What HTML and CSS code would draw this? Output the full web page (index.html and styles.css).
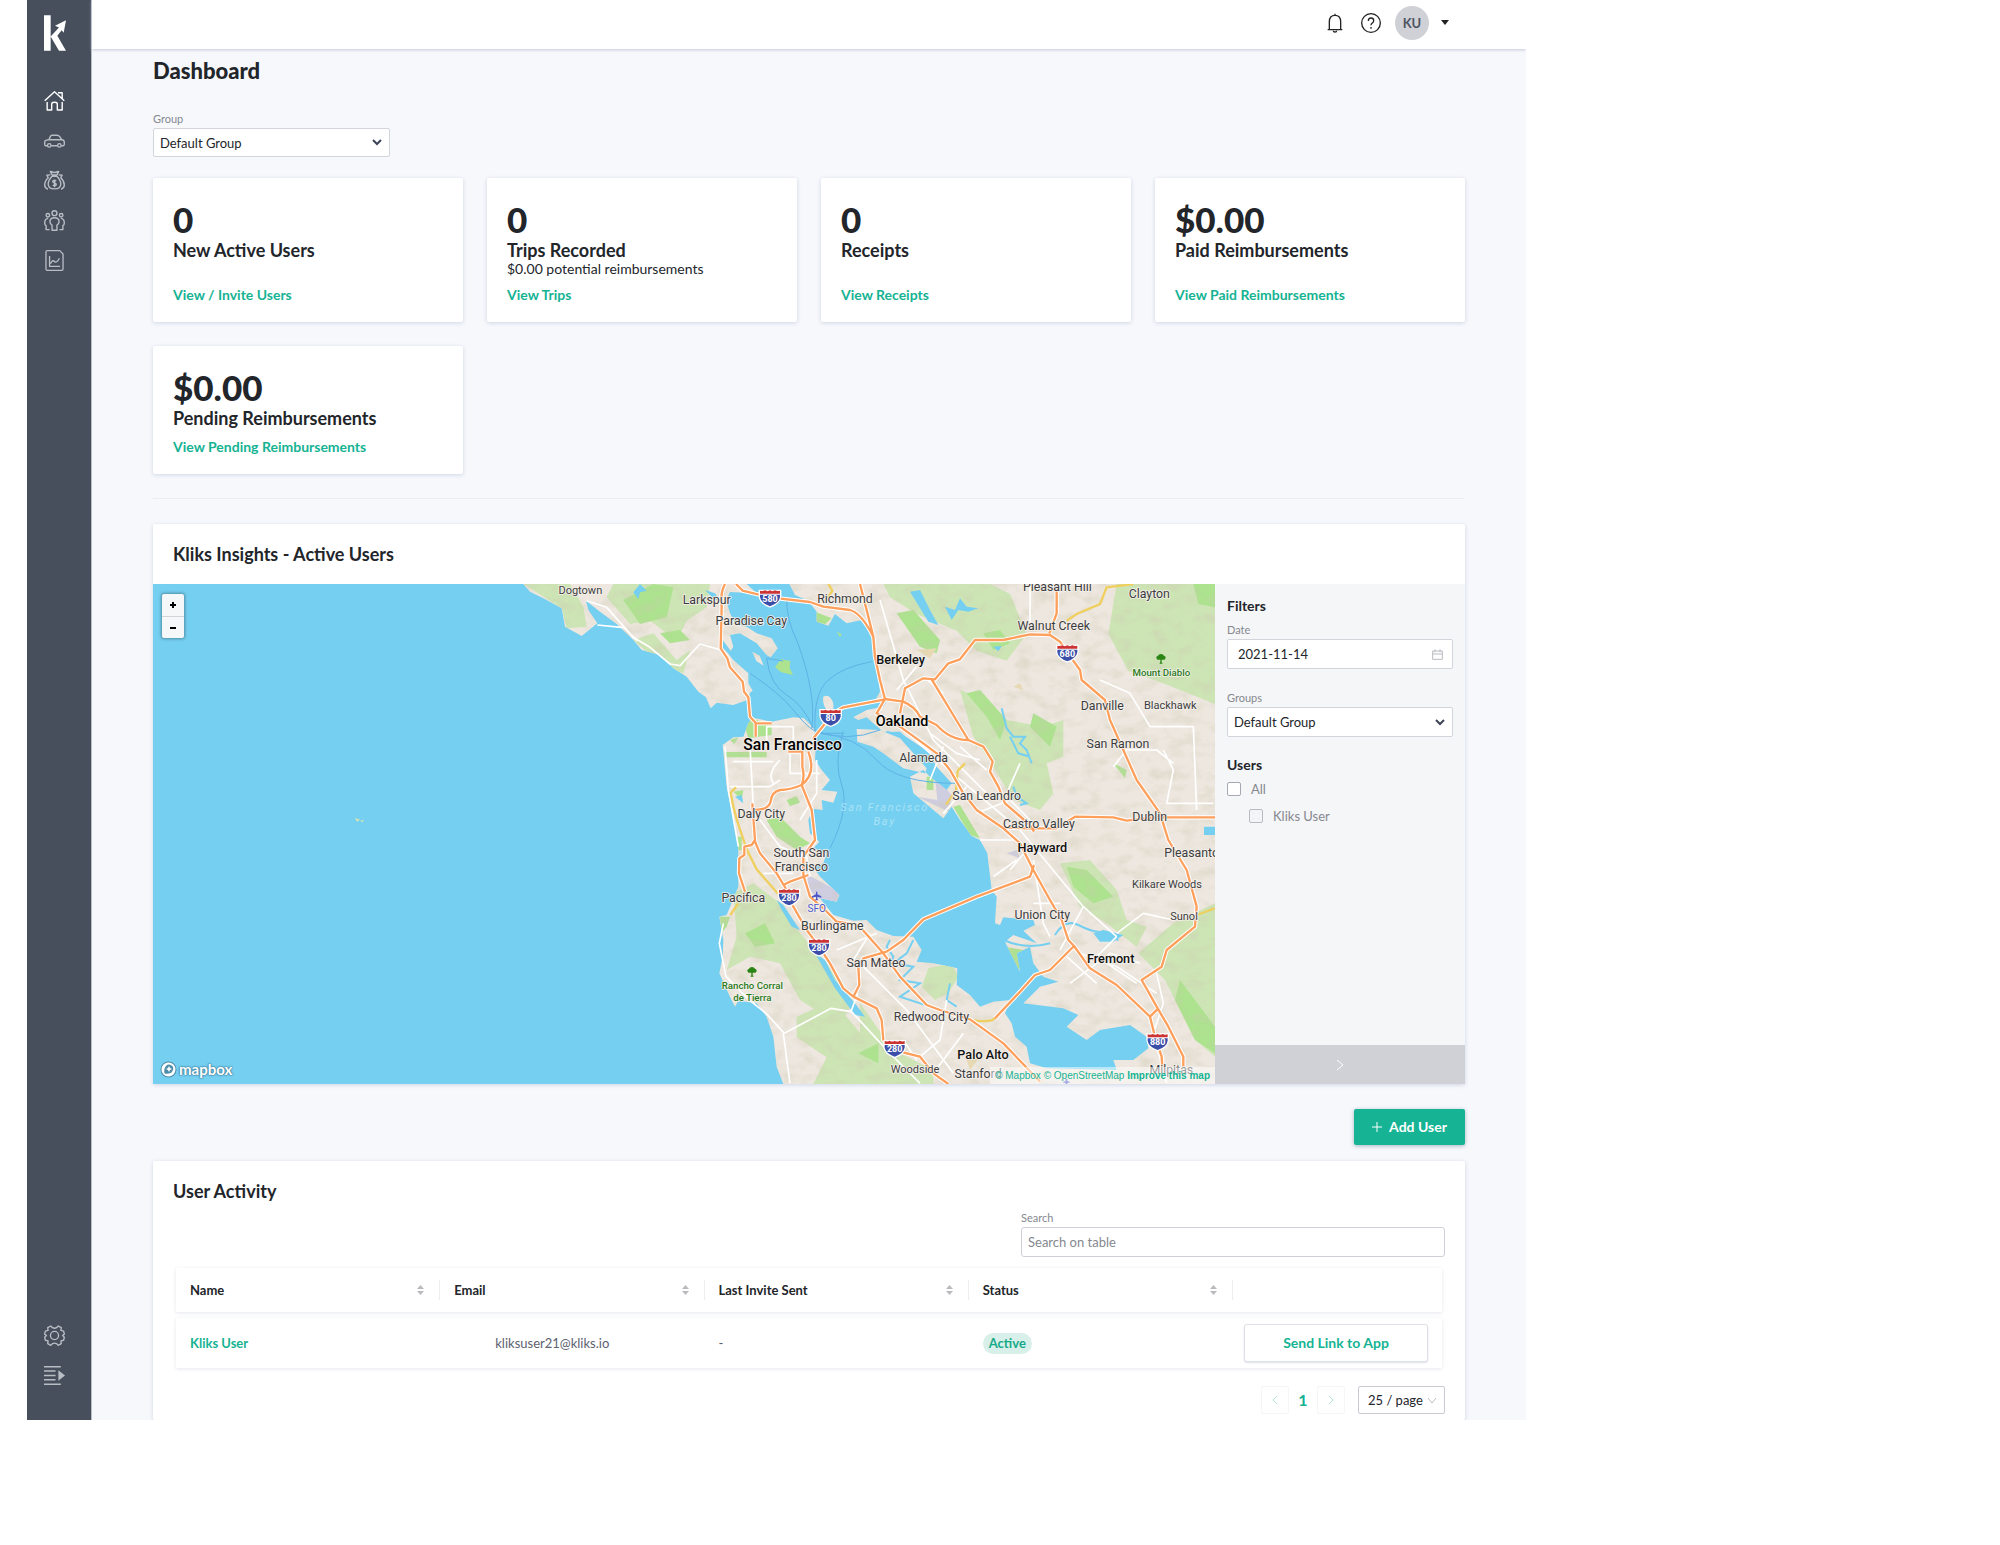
FILE: index.html
```html
<!DOCTYPE html>
<html lang="en">
<head>
<meta charset="utf-8">
<meta name="viewport" content="width=device-width, initial-scale=1">
<title>Dashboard</title>
<link rel="stylesheet" href="styles.css">
</head>
<body>
<div class="app">
  <nav class="sidebar" aria-label="Main">
    <a class="logo" href="#" aria-label="Kliks">
      <svg width="22" height="36" viewBox="0 0 66 107"><path fill="#fff" d="M0 0h20v107H0zM20 64L45 37 33 32 66 15 59 53 53 45 40 62 66 107H45z"/></svg>
    </a>
    <a class="nav-link current" href="#" aria-label="Dashboard">
      <svg class="icon" viewBox="0 0 60 60"><path d="M2 31L30 5l28 26M40 8h12v16M9 34v23h13V40q0-5 8-5t8 5v17h14V34"/></svg>
    </a>
    <a class="nav-link" href="#" aria-label="Trips">
      <svg class="icon" viewBox="0 0 60 60"><path d="M9 45H4q-2 0-2-4v-7q0-4 5-5l7-1 4-9q1-4 6-4h13q5 0 8 4l6 9q7 1 7 7v6q0 4-3 4h-5M21 45h17M14 28h36"/><circle cx="15" cy="44" r="5"/><circle cx="44" cy="44" r="5"/></svg>
    </a>
    <a class="nav-link" href="#" aria-label="Reimbursements">
      <svg class="icon" viewBox="0 0 60 60"><path d="M22 5q8 4 16 0l4-1-5 10H23L18 4zM23 18h14M23 18Q12 30 12 40q0 14 18 14t18-14q0-10-11-22M18 14L8 15l4 7Q2 31 2 43q0 9 9 12M42 14l10 1-4 7q10 9 10 21 0 9-9 12M35 31q-9-4-10 2 0 3 5 4t5 5q-2 5-10 1M30 27v22"/></svg>
    </a>
    <a class="nav-link" href="#" aria-label="Team">
      <svg class="icon" viewBox="0 0 60 60"><circle cx="30" cy="9" r="7"/><circle cx="11" cy="15" r="5"/><circle cx="49" cy="15" r="5"/><path d="M23 58V43q-6-3-6-10 0-11 13-11t13 11q0 7-6 10v15zM12 24q-10 1-10 13 0 6 4 8v11h10M48 24q10 1 10 13 0 6-4 8v11H44"/></svg>
    </a>
    <a class="nav-link" href="#" aria-label="Reports">
      <svg class="icon" viewBox="0 0 60 64"><path d="M4 6q0-4 4-4h38l10 10v46q0 4-4 4H8q-4 0-4-4zM15 18v32h32M18 42q6-14 12-7t15-10"/></svg>
    </a>
    <a class="nav-link push" href="#" aria-label="Settings">
      <svg class="icon" viewBox="0 0 62 62"><circle cx="31" cy="31" r="12"/><path d="M25 8l-5-5-9 5 1 8-8 2-2 9 5 4-5 5 2 9 8 2-1 8 9 5 5-5q6-3 12 0l5 5 9-5-1-8 8-2 2-9-5-5 5-4-2-9-8-2 1-8-9-5-5 5q-6 3-12 0z"/></svg>
    </a>
    <button class="nav-link" type="button" aria-label="Expand menu">
      <svg class="icon" viewBox="0 0 60 60"><path d="M0 5h48M0 17h33M0 30h33M0 42h33M0 55h48"/><path fill="currentColor" stroke="none" d="M41 15l19 15-19 15z"/></svg>
    </button>
  </nav>

  <div class="page">
    <header class="topbar">
      <button class="plain" type="button" aria-label="Notifications">
        <svg width="16" height="20" viewBox="0 0 48 60" fill="none" stroke="#222" stroke-width="4"><path d="M2 50h44M7 50V26Q7 7 24 7t17 19v24M24 2v5M19 53q0 4 5 4t5-4"/></svg>
      </button>
      <button class="plain help" type="button" aria-label="Help">
        <svg width="20" height="20" viewBox="0 0 60 60" fill="none" stroke="#222" stroke-width="4"><circle cx="30" cy="30" r="28"/><path d="M22 24q0-9 8-9t8 8q0 4-4 7t-4 7M30 42v5"/></svg>
      </button>
      <span class="avatar">KU</span>
      <button class="plain" type="button" aria-label="Account menu">
        <svg width="8" height="6" viewBox="0 0 8 6"><path fill="#222" d="M0 0h8L4 5z"/></svg>
      </button>
    </header>

    <main class="content">
      <h1>Dashboard</h1>
      <div class="field group-field">
        <label for="group">Group</label>
        <div class="select">
          <select id="group"><option>Default Group</option></select>
          <svg class="chevron" viewBox="0 0 10 7"><path d="M1 1l4 4 4-4"/></svg>
        </div>
      </div>

      <section class="stats">
        <article class="card stat"><strong>0</strong><h2>New Active Users</h2><a href="#">View / Invite Users</a></article>
        <article class="card stat"><strong>0</strong><h2>Trips Recorded</h2><p>$0.00 potential reimbursements</p><a href="#">View Trips</a></article>
        <article class="card stat"><strong>0</strong><h2>Receipts</h2><a href="#">View Receipts</a></article>
        <article class="card stat"><strong>$0.00</strong><h2>Paid Reimbursements</h2><a href="#">View Paid Reimbursements</a></article>
        <article class="card stat"><strong>$0.00</strong><h2>Pending Reimbursements</h2><a href="#">View Pending Reimbursements</a></article>
      </section>

      <hr>

      <section class="card insights">
        <h2>Kliks Insights - Active Users</h2>
        <div class="insights-body">
          <div class="map">
            <svg class="map-canvas" viewBox="-1041 12 3186 1500" preserveAspectRatio="xMidYMid slice" role="img" aria-label="Map of the San Francisco Bay Area">
              <defs>
                <filter id="relief" x="0" y="0" width="100%" height="100%">
                  <feTurbulence type="fractalNoise" baseFrequency=".02 .03" numOctaves="3" seed="8"/>
                  <feColorMatrix values="0 0 0 0 .62  0 0 0 0 .58  0 0 0 0 .45  1.6 0 0 0 -.72"/>
                </filter>
                <g id="shield"><path fill="#fff" d="M-34-24h68v20q-2 24-34 34-32-10-34-34z"/><path fill="#3c4fa8" d="M-30-9h60v7Q28 16 0 26-28 16-30-2z"/><path fill="#cc3333" d="M-30-12v-9q8 3 15-1 8 5 15 0 7 5 15 0 7 4 15 1v9z"/></g>
                <g id="tree" fill="#2a8515"><path d="M-13-1q-3-7 4-9 2-5 9-5t9 5q7 2 4 9-3 5-9 3h-8q-6 2-9-3zM-2 0h4v10l3 4H-5l3-4z"/></g>
                <path id="land" d="M70 12L90 35 130 55 185 85 195 140 245 168 292 130 265 90 258 62 300 95 350 132 400 180 425 210 480 225 520 265 560 290 595 335 618 352 632 385 650 368 700 375 742 360 750 338 758 332 745 310 745 280 700 240 680 215 664 200 668 180 692 212 700 200 690 165 720 160 770 190 800 225 812 232 833 205 815 175 770 160 740 140 705 130 690 100 678 60 690 36 770 40 740 12zM757 215l22 12 12 30-22-14zM970 350q20-10 30 20l0 20-20 0q-14-18-10-40z
                  M668 495L700 472 730 470 745 430 757 413 815 425 880 412 912 415 942 445 948 480 945 540 965 570 990 600 965 630 1012 635 1000 668 965 660 968 690 938 686 925 720 930 760 958 785 940 805 980 820 970 850 940 860 958 888 990 918 1018 945 1010 965 960 955 1000 1005 1060 1022 1100 1020 1130 1050 1180 1068 1240 1070 1265 1110 1250 1145 1300 1150 1372 1165 1370 1215 1410 1245 1440 1280 1480 1265 1530 1260 1515 1300 1535 1330 1545 1370 1580 1400 1590 1450 1640 1465 1640 1512 850 1512 830 1460 820 1370 800 1310 770 1270 715 1262 705 1280 690 1250 658 1180 668 1130 670 1080 658 1010 680 1005 715 920 715 800 705 740 680 620z
                  M868 12L885 45 925 62 950 95 950 125 985 137 1005 102 1040 130 1085 120 1115 150 1125 190 1130 260 1140 335 1125 362 1165 355 1150 380 1100 390 1060 412 1075 420 1100 412 1120 430 1150 455 1200 455 1240 490 1280 510 1310 560 1355 610 1340 630 1290 590 1270 570 1230 590 1240 640 1330 715 1355 680 1380 720 1415 768 1440 780 1462 820 1475 930 1490 950 1485 1030 1500 1035 1510 1012 1600 1020 1605 1035 1570 1052 1610 1090 1540 1065 1515 1085 1560 1175 1550 1120 1590 1100 1600 1150 1630 1190 1675 1205 1620 1220 1570 1270 1690 1285 1735 1305 1700 1340 1760 1380 1800 1350 1890 1335 1940 1370 1945 1405 1900 1440 1840 1440 1850 1470 1640 1465 1640 1512 2145 1512 2145 12z
                  M1070 447L1140 450 1200 475 1240 520 1280 565 1275 580 1210 565 1150 520 1120 500 1072 485z"/>
                <clipPath id="land-clip"><use href="#land"/></clipPath>
              </defs>
              <rect x="-1041" y="12" width="3186" height="1500" fill="#75cff0"/>
              <use href="#land" fill="#ede7df"/>
              <g clip-path="url(#land-clip)">
                <g fill="#cde5b5">
                  <path d="M70 12l115 73 15 60 60-5-10-60-40-68zM340 12h290l-10 70-60 40-30 60-80-60-60 10-70-80zM400 180l60-20 70 80 40-30-20 70-60-20z"/>
                  <path d="M700 940l60-30 80 60 60 90 90 100 60 120-30 60-40-30-80-50-60-110-90-20-70 40 30-100zM890 1310l90-40 60 40 100 120v82H940l40-80-90-60zM1080 1270l100 140 120 60v42h-220z"/>
                  <path d="M1150 12h320l60 30 50 120-60 80-90-30-60-60-120-50-80-50zM1380 330l80 30 60 60 110 20 60-20v110l-50 20 20 90-40 50-80-30-60-100-60-90zM1850 12h295v360l-150-60-110-40-60-110zM1680 850l90-10 80 90 30 90 60 20-30 60-90-70-80-50z"/>
                  <path d="M2020 1030l125-60v460l-60-50-90-180-80-80zM1285 1165l70-15 20 40-30 50-40 20-40-40z"/>
                </g>
                <g fill="#ade28f">
                  <path d="M370 60l90-48 60 10-20 90-80 20zM480 160l60-10 30 30-60 10zM735 440l20-25 60 20v30l-70 10zM678 516h122v16H678zM800 720l40-10 60 60 30 20-40 20-60-40zM735 1060l60-30 30 60-60 10zM1075 1420l60-30v60zM690 480l25-8-12 20zM860 660l30-12 10 20-30 10zM700 635l30-5-5 30zM710 770l15 0v40h-15zM660 1010h30l-10 30-16 20zM945 95l50 20-20 18-25-8z"/>
                  <path d="M1190 100l50-10 80 90-10 40-50-20zM1700 860l60 10 80 80-60 20-60-50zM1450 160l50-10 30 40-50 20zM1600 400l70 40-20 60-60-60zM1510 1100l60 10-5 50-20 20-30-30zM1840 550l40 20-5 25zM2040 1200l105 140v80l-60-40-60-120zM2080 12h65v70l-50-10zM1400 340l40-10 80 90-20 60-40-70zM1360 680l20-5 60 100-30-10zM1830 1370l60 60-70 10zM1280 590h20v40h-20z"/>
                </g>
                <g fill="#cfcde0"><path d="M925 885l93 50-8 30-60-10-30-40zM1305 590l50 55-8 50-95-45 60 10zM1520 820l30-10 10 25z"/></g>
                <g fill="#e6d9b3"><path d="M1250 210l60-5-20 30zM1400 1440l40-10-30 40zM1540 320l20-10 10 20z"/></g>
                <rect x="70" y="12" width="2075" height="1500" filter="url(#relief)" opacity=".6"/>
              </g>
              <path fill="#ade28f" d="M825 262l18-24 28 5-2 20 10 22-35-8zM1010 155l15 8-5 8z"/>
              <g fill="#75cff0">
                <path d="M1230 35l30-5 30 60 25 45-30-10zM1335 80l30 10 15-35 20 25 35 5-30 10-30-5-20 30zM1480 200l25-2-10 16zM830 960l20 15 40 60 10 15-25-10-30-50zM945 1120l30 20 30 60 60 70 30 40-30-5-60-80zM2112 740h33v25h-33zM1780 1060l30-10 60 15-30 20-40 0zM705 650l20-5 5 25z"/>
                <path d="M420 12l20 20-20 5-5 20-15-20zM615 30l30 10 20 30-30-20z"/>
              </g>
              <g fill="none" stroke="#75cff0" stroke-width="6"><path d="M1505 385l15 60 20 25 35 0-15 20 20 20 15 40M1530 470l25 50 35 10M1540 620l10 30 30 20-20 5M1170 1080l-10 20 20 30-10 30M1240 1080l-20 40-40 30 60 10-40 40 60 10-60 40 90 30M1350 1210l-10 50 30 20M1665 1065q30-50 70-30t60 20l60 25M1510 1080q70 30 140 10M1160 455l60 20 60 40 20 30M1300 560l40 50"/></g>
              <path fill="none" stroke="#5fb2e6" stroke-width="3" d="M750 280q90 60 130 110t60 60M800 235q10 80 60 110t80 100M800 235l50 8M860 60q0 60 30 120 60 160 45 265M945 450q-5-110 40-150t130-55M940 450q100 40 200 0M960 460q110 10 170 80t240 70M1030 455q-30 90-5 160t-35 190M960 460h70"/>
              <g fill="none" stroke="#fff" stroke-width="5" stroke-linejoin="round">
                <path d="M260 62l60 20 80 90 50 30 60 50 30 5 60-65 70 20M292 135l80 8 40 40M675 500l10 130 30 170M750 500l10 180M800 500v-60h80v70M870 510v70h90M700 545h120M690 620h120l30-20M840 540q-40 40-20 70M950 540v100l-50 80M780 720l60 80 80 30 10 60M790 880h90M670 1030l-12 60 20 100 70 70 50 40 55 60 140-75 60 10 20-55M850 1360l20 150M1050 1290l120 130 90 90M1090 1160l130 130 140 190M1010 1110l120-50M1060 1140l50-80"/>
                <path d="M1140 60l70 240 90 180 160 160M1190 330l60-70M1270 290l60 50M1200 440l170 150 190 160M1380 500l80 70M1560 750l190 230 100 90M1600 840l30 190 20 40M1480 890l70-50M1750 980l-70 130M1700 1130l90 80M1740 1120l110 40 120 80M1590 12v120M1560 550l-40 90M1800 300l90 40 60 100 130 0 10 250M1990 510l30 60-20 100h140M1840 560l40-50h90l50 40M1850 1060l80-60 90 20M1710 1210l120-90 90 30M1850 1070l-60 60 120 80M1340 1260l-20 120-60 50M1430 700l100-40 60 60M1530 870l50-60M1600 970h80"/>
                <path d="M1290 460l80 60 70 20M1330 500l-40 100M1400 620l-70 80M1440 780h100M1970 1180l20 90-30 90 40 150M1300 1480l90-120M1210 1380l40 60"/>
              </g>
              <g fill="none" stroke="#efcf5e" stroke-width="7"><path d="M708 622l-16 16q10 60 28 110l20 60 30 60 70 80M715 970l-24 35M985 12l12 20-20 30M1900 12l-80 10-20 50-70 30-30 20M1395 550l-22 22-5 60-30 42M1410 1320q70 10 75-8M2090 1005l55-20"/></g>
              <g fill="none" stroke="#fff" stroke-width="13" stroke-linejoin="round"><use href="#highways"/></g>
              <g fill="none" stroke="#ff9f5c" stroke-width="7" stroke-linejoin="round">
                <g id="highways">
                  <path d="M675 12Q660 40 665 80L662 205 682 235 690 262 728 305 732 335 745 352 750 410 768 430H815M767 430V470M708 12L728 32 810 52 930 66 970 80 1050 90Q1085 100 1120 170L1125 230 1140 300 1155 357M1080 12L1100 90 1120 170M940 475L1000 400 1030 382 1155 358M865 515H907V560Q915 590 905 615 870 630 840 630 815 635 812 665 805 690 765 690M925 515Q950 580 905 615L935 690 945 780 910 830V885L930 950 975 990 1010 1025 1075 1035 1150 1120 1200 1190 1280 1275 1320 1290 1410 1318 1510 1390 1620 1505M757 670L765 780 755 795 733 800V825L718 835 717 880 735 935M763 780L780 820 830 880 860 930 880 980 920 1050 957 1100 990 1150 1030 1225 1060 1250 1130 1285 1145 1320 1150 1380 1180 1410 1260 1430 1300 1480 1345 1512M850 915L870 905 925 885M1060 1250L1078 1215 1075 1160 1090 1135 1160 1115 1210 1080 1270 1018 1430 950 1590 890 1602 855"/>
                  <g transform="translate(1080 0)"><path d="M75 357L130 365Q165 380 180 410L230 435Q270 480 325 480L370 500 398 545 390 575 415 620 435 670 510 735 522 755M75 357L50 400 120 440 190 490 230 520 270 570 310 640 350 690 430 745 480 790 500 830 520 870 570 960 605 1020 625 1080 642 1098 690 1165 770 1215 870 1310 885 1370 905 1430 908 1480M120 400L135 325 190 295 225 298 265 250 300 238 345 180 430 180 510 163 570 165 600 185 622 218 660 270 665 300 735 360 750 420 790 510 830 600 900 700 925 780 980 870 1010 980 1005 1040 920 1110 905 1160 845 1200 890 1280 925 1340 970 1430V1460M215 298L325 480M430 742L500 745 590 745 645 710 760 712 800 722 880 712H1065M590 12V100L568 160M642 1098L570 1170 525 1185 480 1235 405 1315M870 1310L895 1285"/></g>
                </g>
              </g>
              <g class="shields">
                <use href="#shield" x="810" y="53"/><text x="810" y="65">580</text>
                <use href="#shield" x="992" y="411"/><text x="992" y="423">80</text>
                <use href="#shield" x="867" y="950"/><text x="867" y="962">280</text>
                <use href="#shield" x="957" y="1100"/><text x="957" y="1112">280</text>
                <use href="#shield" x="1702" y="218"/><text x="1702" y="230">680</text>
                <use href="#shield" x="1184" y="1404"/><text x="1184" y="1416">280</text>
                <use href="#shield" x="1973" y="1384"/><text x="1973" y="1396">880</text>
              </g>
              <use href="#tree" x="756" y="1176"/><use href="#tree" x="1983" y="237"/>
              <path fill="#4b57c8" d="M948 935h4v8l12 6v4l-12-3v7l4 4h-12l4-4v-7l-12 3v-4l12-6zM1697 1497h5v6l10 4-10 2v4h-5v-4l-10-2 10-4z"/>
              <g class="places">
                <g class="town"><text x="241" y="41">Dogtown</text><text x="2001" y="924">Kilkare Woods</text><text x="2052" y="1019">Sunol</text><text x="2011" y="388">Blackhawk</text><text x="1245" y="1478">Woodside</text></g>
                <g class="city"><text x="620" y="73">Larkspur</text><text x="754" y="134">Paradise Cay</text><text x="1035" y="68">Richmond</text><text x="784" y="713">Daly City</text><text x="904" y="831">South San</text><text x="904" y="873">Francisco</text><text x="730" y="967">Pacifica</text><text x="997" y="1050">Burlingame</text><text x="1128" y="1162">San Mateo</text><text x="1672" y="34">Pleasant Hill</text><text x="1948" y="53">Clayton</text><text x="1661" y="151">Walnut Creek</text><text x="1807" y="389">Danville</text><text x="1854" y="504">San Ramon</text><text x="1271" y="547">Alameda</text><text x="1460" y="659">San Leandro</text><text x="1617" y="744">Castro Valley</text><text x="1949" y="723">Dublin</text><text x="2085" y="831">Pleasanton</text><text x="1627" y="1016">Union City</text><text x="1294" y="1323">Redwood City</text><text x="1434" y="1494">Stanford</text><text x="2014" y="1483">Milpitas</text></g>
                <g class="major"><text x="1202" y="251">Berkeley</text><text x="1627" y="815">Hayward</text><text x="1832" y="1150">Fremont</text><text x="1449" y="1436">Palo Alto</text></g>
                <g class="metro"><text x="1206" y="438">Oakland</text></g>
                <g class="metro big"><text x="878" y="511">San Francisco</text></g>
                <g class="park"><text x="757" y="1227">Rancho Corral</text><text x="757" y="1263">de Tierra</text><text x="1984" y="287">Mount Diablo</text></g>
                <g class="airport"><text x="950" y="995">SFO</text></g>
                <g class="water"><text x="1154" y="692">San Francisco</text><text x="1154" y="735">Bay</text></g>
              </g>
              <path fill="#cfe4b4" d="M-436 715l16 3-8 8zM-420 722l12-3-4 8z"/>
            </svg>
            <div class="zoom">
              <button type="button" aria-label="Zoom in"><svg viewBox="0 0 8 8"><path d="M1 4h6M4 1v6"/></svg></button>
              <button type="button" aria-label="Zoom out"><svg viewBox="0 0 8 8"><path d="M1 4h6"/></svg></button>
            </div>
            <a class="mapbox" href="#">
              <svg width="17" height="17" viewBox="0 0 34 34"><circle cx="17" cy="17" r="16" fill="#4f8ea8"/><circle cx="17" cy="17" r="14" fill="#fff"/><path fill="#4f8ea8" d="M9 25q-2-10 3-15t11-1 2 11-16 5z"/><path fill="#fff" d="M18 10l2 4 4 2-4 2-2 4-2-4-4-2 4-2z"/></svg>
              <span>mapbox</span>
            </a>
            <div class="attribution"><a href="#">© Mapbox</a> <a href="#">© OpenStreetMap</a> <a class="improve" href="#">Improve this map</a></div>
          </div>
          <aside class="filters">
            <div class="filter-fields">
              <h3>Filters</h3>
              <div class="field">
                <label for="date">Date</label>
                <div class="select date">
                  <input id="date" type="text" value="2021-11-14">
                  <svg class="calendar" viewBox="0 0 33 33"><path d="M2 6h29v25H2zM2 15h29M9 1v9M24 1v9"/></svg>
                </div>
              </div>
              <div class="field groups-field">
                <label for="groups">Groups</label>
                <div class="select">
                  <select id="groups"><option>Default Group</option></select>
                  <svg class="chevron" viewBox="0 0 10 7"><path d="M1 1l4 4 4-4"/></svg>
                </div>
              </div>
              <h3>Users</h3>
              <label class="check"><input type="checkbox">All</label>
              <label class="check nested"><input type="checkbox" disabled>Kliks User</label>
            </div>
            <button class="collapse" type="button" aria-label="Hide filters"><svg width="8" height="12" viewBox="0 0 8 12"><path d="M1 1l6 5-6 5"/></svg></button>
          </aside>
        </div>
      </section>

      <button class="add-user" type="button"><svg width="10" height="10" viewBox="0 0 10 10"><path d="M0 5h10M5 0v10"/></svg>Add User</button>

      <section class="card activity">
        <h2>User Activity</h2>
        <div class="field search">
          <label for="search">Search</label>
          <input id="search" type="text" placeholder="Search on table">
        </div>
        <table>
          <colgroup><col><col><col><col><col class="c-action"></colgroup>
          <thead>
            <tr>
              <th><div class="th">Name<svg class="sort" viewBox="0 0 7 10"><path d="M0 4l3.500-4L7 4zM0 6l3.500 4L7 6z"/></svg></div></th>
              <th><div class="th">Email<svg class="sort" viewBox="0 0 7 10"><path d="M0 4l3.500-4L7 4zM0 6l3.500 4L7 6z"/></svg></div></th>
              <th><div class="th">Last Invite Sent<svg class="sort" viewBox="0 0 7 10"><path d="M0 4l3.500-4L7 4zM0 6l3.500 4L7 6z"/></svg></div></th>
              <th><div class="th">Status<svg class="sort" viewBox="0 0 7 10"><path d="M0 4l3.500-4L7 4zM0 6l3.500 4L7 6z"/></svg></div></th>
              <th></th>
            </tr>
          </thead>
          <tbody>
            <tr>
              <td><a href="#">Kliks User</a></td>
              <td class="email">kliksuser21@kliks.io</td>
              <td>-</td>
              <td><span class="tag">Active</span></td>
              <td class="action"><button class="send" type="button">Send Link to App</button></td>
            </tr>
          </tbody>
        </table>
        <div class="pagination">
          <button class="step" type="button" aria-label="Previous page" disabled><svg width="6" height="10" viewBox="0 0 6 10"><path d="M5 1L1 5l4 4"/></svg></button>
          <a class="page-number" href="#">1</a>
          <button class="step" type="button" aria-label="Next page" disabled><svg width="6" height="10" viewBox="0 0 6 10"><path d="M1 1l4 4-4 4"/></svg></button>
          <div class="select size">
            <select aria-label="Rows per page"><option>25 / page</option></select>
            <svg class="chevron light" viewBox="0 0 10 7"><path d="M1 1l4 5 4-5"/></svg>
          </div>
        </div>
      </section>
    </main>
  </div>
</div>
</body>
</html>
```
FILE: styles.css
```css
* { box-sizing: border-box; }
body { margin: 0; background: #fff; color: #22252a; font: 13px/16px Lato, "Open Sans", sans-serif; }
h1, h2, h3, p { margin: 0; }
button, input, select { font: inherit; color: inherit; margin: 0; }
button { cursor: pointer; }
a { color: #15b393; text-decoration: none; }

.app { display: flex; margin: 0 474px 125px 27px; background: #f7f8fc; overflow: clip; }

.sidebar { flex: 0 0 65px; display: flex; flex-direction: column; padding: 15px 0 25px 17px; background: #474f5d; border-right: 1px solid #b9bdc5; }
.logo { height: 65px; }
.logo svg { display: block; }
.nav-link { display: flex; align-items: center; width: 22px; height: 40px; padding: 0; border: 0; background: none; color: #b9bdc4; }
.nav-link.current { color: #fff; }
.push { margin-top: auto; }
.icon { width: 21px; height: 21px; fill: none; stroke: currentColor; stroke-width: 4; stroke-linejoin: round; }

.page { flex: 1; min-width: 0; }
.topbar { display: flex; justify-content: flex-end; align-items: center; height: 49px; padding: 0 77px 3px 0; background: #fff; box-shadow: 0 1px 3px #c3cbda; }
.plain { display: flex; padding: 0; border: 0; background: none; }
.help { margin: 0 14px 0 18px; }
.avatar { width: 34px; height: 34px; margin-right: 12px; border-radius: 50%; background: #d0d1d6; color: #4c5464; font-weight: 700; line-height: 34px; text-align: center; }

.content { padding: 8px 61px 0; }
h1 { font-size: 22px; line-height: 28px; font-weight: 900; }
h2 { font-size: 18px; line-height: 22px; font-weight: 700; }
h3 { font-size: 14px; line-height: 20px; font-weight: 700; }

.field { display: flex; flex-direction: column; gap: 1px; }
.field label { font-size: 11px; line-height: 16px; color: #85888f; }
.group-field { width: 237px; margin: 26px 0 21px; }
.select { display: grid; grid-template-columns: 1fr; align-items: center; }
.select > * { grid-area: 1 / 1; }
.select select, .select input { appearance: none; width: 100%; height: 29px; padding: 0 6px; border: 1px solid #d3d5dc; border-radius: 2px; background: #fff; outline: 0; }
.select .chevron { justify-self: end; width: 10px; height: 7px; margin-right: 8px; fill: none; stroke: #3c4557; stroke-width: 2; pointer-events: none; }
.select .light { stroke: #b9bcc3; stroke-width: 1; }

.card { border-radius: 2px; background: #fff; box-shadow: 0 1px 4px #cdd4e2; }
.stats { display: grid; grid-template-columns: repeat(4, 1fr); gap: 24px; }
.stat { display: flex; flex-direction: column; padding: 21px 20px 17px; }
.stat strong { font-size: 35px; line-height: 40px; font-weight: 900; }
.stat p { font-size: 14px; }
.stat a { margin-top: auto; padding-top: 8px; font-size: 14px; line-height: 20px; font-weight: 700; }
hr { height: 1px; margin: 24px 0 25px; border: 0; background: #ebedf2; }

.insights h2 { padding: 19px 20px; }
.insights-body { display: flex; min-height: 500px; }
.map { position: relative; flex: 1; min-width: 0; overflow: hidden; background: #75cff0; }
.map-canvas { display: block; width: 100%; height: 100%; }
.map-canvas text { text-anchor: middle; font-family: Roboto, sans-serif; }
.places { fill: #3c3c40; stroke: #f4f0ea; stroke-width: 5; paint-order: stroke; stroke-linejoin: round; }
.town { font-size: 33px; }
.city { font-size: 37px; }
.major { font-size: 38px; font-weight: 500; fill: #111; }
.metro { font-size: 43px; font-weight: 500; fill: #000; }
.big { font-size: 47px; }
.park { font-size: 29px; font-weight: 500; fill: #2a7a1c; }
.airport { font-size: 30px; fill: #4b57c8; }
.water { font-size: 33px; font-style: italic; letter-spacing: 5px; fill: #a9e2f6; stroke: none; }
.shields { font-size: 27px; font-weight: 700; fill: #fff; }

.zoom { position: absolute; top: 10px; left: 9px; width: 22px; border-radius: 2px; overflow: hidden; background: #f5f7f8; box-shadow: 0 0 3px 1px #4f8ea8; }
.zoom button { display: flex; align-items: center; justify-content: center; width: 22px; height: 22px; padding: 0; border: 0; background: none; }
.zoom button + button { border-top: 1px solid #cfd4d8; }
.zoom svg { width: 8px; height: 8px; fill: none; stroke: #000; stroke-width: 2; }
.mapbox { position: absolute; left: 7px; bottom: 6px; display: flex; align-items: center; gap: 2px; color: #fff; font-size: 15px; line-height: 18px; font-weight: 700; text-shadow: 0 0 2px #3f7f9b, 0 0 2px #3f7f9b, 0 0 1px #3f7f9b; }
.attribution { position: absolute; right: 0; bottom: 0; padding: 0 5px; background: rgba(255, 255, 255, .5); font: 10px/17px "Liberation Sans", Arial, sans-serif; }
.improve { font-weight: 700; }

.filters { flex: 0 0 250px; display: flex; flex-direction: column; background: #f5f6f8; }
.filter-fields { flex: 1; padding: 12px 12px 0; }
.filters .field { margin-top: 6px; }
.filters .groups-field { margin: 21px 0 18px; }
.filters select, .filters input[type="text"] { height: 30px; }
.date input[type="text"] { padding-left: 10px; }
.calendar { justify-self: end; width: 11px; height: 11px; margin-right: 10px; fill: none; stroke: #b9bbc0; stroke-width: 3; pointer-events: none; }
.check { display: flex; align-items: center; gap: 10px; height: 27px; color: #85888f; }
.check input { appearance: none; width: 14px; height: 14px; border: 1px solid #a6a9b3; border-radius: 2px; background: #fff; }
.check input:disabled { background: #f3f4f5; border-color: #b9bbc2; }
.nested { margin-left: 22px; }
.collapse { display: flex; align-items: center; justify-content: center; height: 39px; border: 0; background: #d0d1d7; }
.collapse svg { fill: none; stroke: #fff; }

.add-user { display: flex; align-items: center; justify-content: center; gap: 7px; width: 111px; height: 36px; margin: 25px 0 16px auto; padding: 0; border: 0; border-radius: 2px; background: #16b394; color: #fff; font-size: 14px; font-weight: 700; box-shadow: 0 1px 4px #a5b4c0; }
.add-user svg { stroke: #fff; }

.activity { padding: 18px 20px 6px; }
.activity h2 { line-height: 24px; }
.search { width: 424px; margin: 7px 0 5px auto; }
.search input { height: 30px; padding: 0 6px; border: 1px solid #cfd1da; border-radius: 3px; outline: 0; }
.search input::placeholder { color: #85888f; opacity: 1; }
table { width: calc(100% - 6px); margin: 0 3px; border-collapse: separate; border-spacing: 0 6px; table-layout: fixed; }
.c-action { width: 209px; }
tr { box-shadow: 0 1px 4px #e6e7ee; }
th { height: 44px; padding: 0; text-align: left; font-weight: 700; }
.th { display: flex; align-items: center; justify-content: space-between; height: 20px; padding: 0 15px 0 14px; border-right: 1px solid #eceef0; }
.sort { width: 7px; height: 10px; fill: #b8babd; }
td { height: 50px; padding: 0 14px; color: #5c6270; }
td a { font-weight: 700; }
td.email { padding-left: 55px; }
.tag { display: inline-block; height: 21px; padding: 0 6px; border-radius: 11px; background: #d8f0e9; color: #15a98a; font-weight: 700; line-height: 21px; }
td.action { padding: 0 14px 0 11px; }
.send { display: block; width: 100%; height: 38px; border: 1px solid #dfe1e8; border-radius: 3px; background: #fff; color: #15b393; font-size: 14px; font-weight: 700; box-shadow: 0 1px 2px #dfe1e8; }
.pagination { display: flex; justify-content: flex-end; align-items: center; margin-top: 12px; }
.step { display: flex; align-items: center; justify-content: center; width: 28px; height: 28px; padding: 0; border: 1px solid #f6f6f8; border-radius: 2px; background: #fff; }
.step svg { fill: none; stroke: #b5e3d8; }
.page-number { width: 28px; font-size: 16px; font-weight: 700; text-align: center; }
.size { width: 87px; margin-left: 13px; }
.size select { height: 28px; padding: 0 9px; border-color: #c9cbd3; }
```
